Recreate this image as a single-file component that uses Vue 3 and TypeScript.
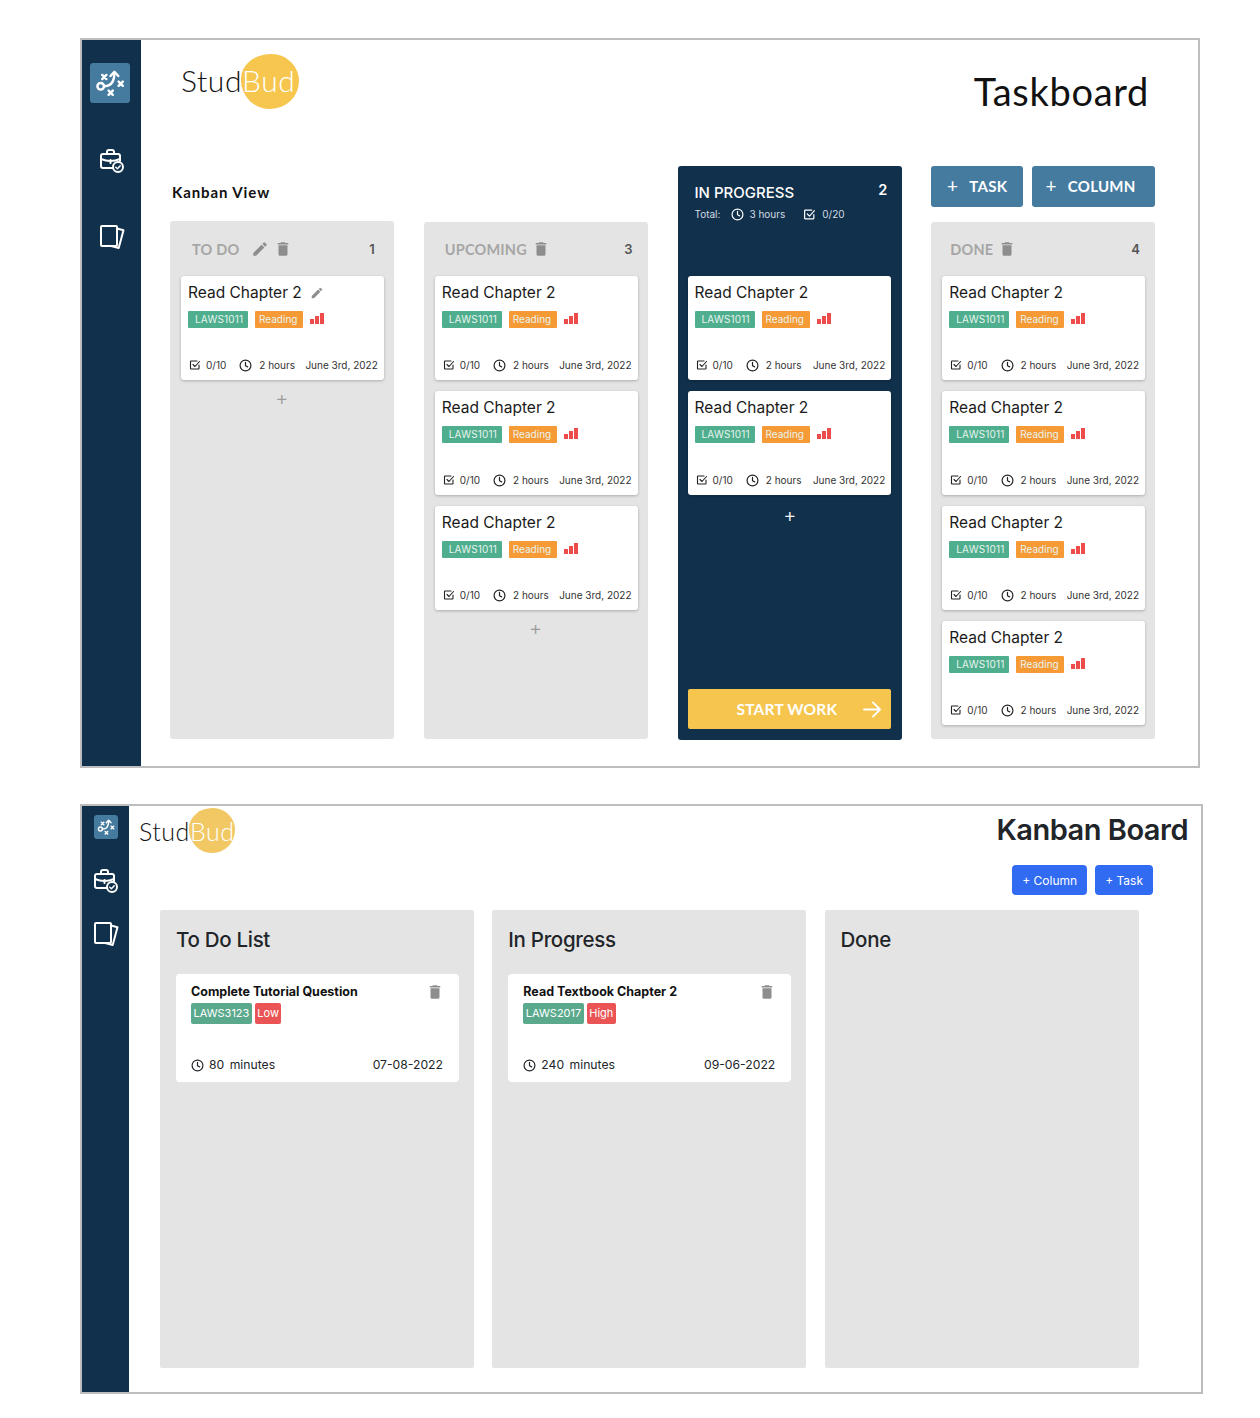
<script setup lang="ts">
interface Column {
  title: string;
  count: number;
  cards: number;
  editable?: boolean;
  add?: boolean;
  active?: boolean;
}

const columns: Column[] = [
  { title: "TO DO", count: 1, cards: 1, editable: true, add: true },
  { title: "UPCOMING", count: 3, cards: 3, add: true },
  { title: "IN PROGRESS", count: 2, cards: 2, add: true, active: true },
  { title: "DONE", count: 4, cards: 4 },
];

const boardColumns = [
  {
    title: "To Do List",
    card: { name: "Complete Tutorial Question", code: "LAWS3123", level: "Low", time: "80 minutes", due: "07-08-2022" },
  },
  {
    title: "In Progress",
    card: { name: "Read Textbook Chapter 2", code: "LAWS2017", level: "High", time: "240 minutes", due: "09-06-2022" },
  },
  { title: "Done", card: null },
];
</script>

<template>
  <svg class="defs" aria-hidden="true">
    <defs>
      <symbol id="i-strategy" viewBox="0 0 40 40">
        <g fill="none" stroke="currentColor" stroke-width="2.400" stroke-linecap="round" stroke-linejoin="round">
          <circle cx="10.700" cy="23.300" r="3.300" />
          <path d="M14 23.300c6.500 0 10.400-4.500 10.400-13.500" />
          <path d="M20.500 13l3.900-4.200 3.900 4.200" />
          <path d="M12.200 11.900l4.200 4.200M16.400 11.900l-4.200 4.200M28.600 18.600l4.200 4.200M32.800 18.600l-4.200 4.200M18.600 27.600l4.200 4.200M22.800 27.600l-4.200 4.200" />
        </g>
      </symbol>
      <symbol id="i-case" viewBox="0 0 26 26">
        <g fill="none" stroke="currentColor" stroke-width="2" stroke-linecap="round" stroke-linejoin="round">
          <path d="M14 20H4a2 2 0 0 1-2-2V8a2 2 0 0 1 2-2h15a2 2 0 0 1 2 2v5" />
          <path d="M8 6V4a2 2 0 0 1 2-2h3a2 2 0 0 1 2 2v2" />
          <path d="M2 11c6 2.600 13 2.600 19 0M11.500 12v3" />
          <circle cx="19" cy="19" r="5" />
          <path d="M16.800 19.200l1.600 1.500 2.800-3" stroke-width="1.500" />
        </g>
      </symbol>
      <symbol id="i-cards" viewBox="0 0 26 26">
        <g fill="none" stroke="currentColor" stroke-width="2" stroke-linejoin="round" stroke-linecap="round">
          <rect x="2" y="2" width="16" height="20" rx="1" />
          <path d="M18 4.500l6.500 1.800-4.800 17.700-7.500-2" />
        </g>
      </symbol>
      <symbol id="i-pencil" viewBox="0 0 24 24">
        <path fill="currentColor" d="M3 17.250V21h3.750L17.810 9.940l-3.750-3.750L3 17.250zM20.710 7.040a1 1 0 0 0 0-1.410l-2.340-2.340a1 1 0 0 0-1.410 0l-1.830 1.830 3.750 3.750 1.830-1.830z" />
      </symbol>
      <symbol id="i-trash" viewBox="0 0 24 24">
        <path fill="currentColor" d="M6 19c0 1.100.9 2 2 2h8c1.100 0 2-.9 2-2V7H6v12zM19 4h-3.500l-1-1h-5l-1 1H5v2h14V4z" />
      </symbol>
      <symbol id="i-check" viewBox="0 0 24 24">
        <g fill="none" stroke="currentColor" stroke-width="2.200" stroke-linecap="round" stroke-linejoin="round">
          <path d="M20 12v7a1 1 0 0 1-1 1H4a1 1 0 0 1-1-1V5a1 1 0 0 1 1-1h12" />
          <path d="M8 11l4 4 9-10" />
        </g>
      </symbol>
      <symbol id="i-clock" viewBox="0 0 24 24">
        <g fill="none" stroke="currentColor" stroke-width="2.200" stroke-linecap="round" stroke-linejoin="round">
          <circle cx="12" cy="12" r="10" />
          <path d="M12 6v6.500l4 2" />
        </g>
      </symbol>
      <symbol id="i-bars" viewBox="0 0 14 11">
        <path fill="currentColor" d="M0 6h4v5H0zM5 3h4v8H5zM10 0h4v11h-4z" />
      </symbol>
    </defs>
  </svg>

  <div class="page">
    <!-- design mockup -->
    <section class="frame frame-design">
      <nav class="side">
        <span class="side-tile"><svg><use href="#i-strategy" /></svg></span>
        <span class="side-icon case"><svg><use href="#i-case" /></svg></span>
        <span class="side-icon cards"><svg><use href="#i-cards" /></svg></span>
      </nav>
      <div class="main">
        <header class="top">
          <div class="logo"><span class="blob"></span><span>Stud</span><span class="bud">Bud</span></div>
          <h1>Taskboard</h1>
        </header>
        <div class="board">
          <div v-for="(col, i) in columns" :key="col.title" class="slot">
            <h2 v-if="i === 0" class="view-label">Kanban View</h2>
            <div v-if="i === 3" class="top-actions">
              <button type="button" class="task-btn"><span>+</span>TASK</button>
              <button type="button" class="col-btn"><span>+</span>COLUMN</button>
            </div>
            <div class="panel" :class="{ active: col.active, first: i === 0, last: i === 3 }">
              <div v-if="col.active" class="active-head">
                <div class="active-title"><span>{{ col.title }}</span><b>{{ col.count }}</b></div>
                <div class="totals">
                  <span>Total:</span>
                  <svg class="ic-total"><use href="#i-clock" /></svg>
                  <span>3 hours</span>
                  <svg class="ic-total second"><use href="#i-check" /></svg>
                  <span>0/20</span>
                </div>
              </div>
              <div v-else class="panel-head">
                <span class="panel-title">{{ col.title }}</span>
                <svg v-if="col.editable" class="ic-head"><use href="#i-pencil" /></svg>
                <svg class="ic-head"><use href="#i-trash" /></svg>
                <span class="panel-count">{{ col.count }}</span>
              </div>
              <div class="cards">
                <article v-for="n in col.cards" :key="n" class="card">
                  <div class="card-name">
                    Read Chapter 2
                    <svg v-if="col.editable" class="ic-edit"><use href="#i-pencil" /></svg>
                  </div>
                  <div class="tags">
                    <span class="tag green">LAWS1011</span>
                    <span class="tag orange">Reading</span>
                    <svg class="ic-bars"><use href="#i-bars" /></svg>
                  </div>
                  <div class="card-foot">
                    <svg class="ic-foot"><use href="#i-check" /></svg>
                    <span class="progress">0/10</span>
                    <svg class="ic-foot clock"><use href="#i-clock" /></svg>
                    <span>2 hours</span>
                    <span class="date">June 3rd, 2022</span>
                  </div>
                </article>
              </div>
              <div v-if="col.add" class="add">+</div>
              <button v-if="col.active" type="button" class="start">
                <span>START WORK</span>
                <svg viewBox="0 0 20 18" class="arrow">
                  <path d="M1 9h17M10.500 1.500 18 9l-7.500 7.500" fill="none" stroke="currentColor" stroke-width="2" stroke-linecap="round" stroke-linejoin="round" />
                </svg>
              </button>
            </div>
          </div>
        </div>
      </div>
    </section>

    <!-- built page -->
    <section class="frame frame-built">
      <nav class="side side-small">
        <span class="side-tile"><svg><use href="#i-strategy" /></svg></span>
        <span class="side-icon case"><svg><use href="#i-case" /></svg></span>
        <span class="side-icon cards"><svg><use href="#i-cards" /></svg></span>
      </nav>
      <div class="main-built">
        <header class="top-built">
          <div class="logo logo-small"><span class="blob"></span><span>Stud</span><span class="bud">Bud</span></div>
          <div class="top-right">
            <h1>Kanban Board</h1>
            <div class="blue-actions">
              <button type="button">+ Column</button>
              <button type="button">+ Task</button>
            </div>
          </div>
        </header>
        <div class="board-built">
          <div v-for="col in boardColumns" :key="col.title" class="lane">
            <h2>{{ col.title }}</h2>
            <article v-if="col.card" class="lane-card">
              <div class="lane-name">
                <span>{{ col.card.name }}</span>
                <svg><use href="#i-trash" /></svg>
              </div>
              <div class="lane-tags">
                <span class="lane-tag code">{{ col.card.code }}</span>
                <span class="lane-tag level">{{ col.card.level }}</span>
              </div>
              <div class="lane-foot">
                <svg><use href="#i-clock" /></svg>
                <span class="lane-time">{{ col.card.time }}</span>
                <span class="lane-due">{{ col.card.due }}</span>
              </div>
            </article>
          </div>
        </div>
      </div>
    </section>
  </div>
</template>

<style>
html,
body {
  background: #ffffff;
}
</style>

<style scoped>
.defs {
  position: absolute;
  width: 0;
  height: 0;
}

.page {
  display: flex;
  flex-direction: column;
  gap: 36px;
  box-sizing: border-box;
  width: 1260px;
  height: 1418px;
  padding: 38px 0 0 80px;
  font-family: Inter, "Liberation Sans", sans-serif;
  color: #111111;
}

.frame {
  display: flex;
  box-sizing: border-box;
  border: 2px solid #bdbdbd;
  background: #ffffff;
}

.frame-design {
  width: 1120px;
  height: 730px;
}

.frame-built {
  width: 1123px;
  height: 590px;
}

.side {
  display: flex;
  flex-direction: column;
  align-items: center;
  flex: none;
  width: 59px;
  padding-top: 23px;
  box-sizing: border-box;
  background: #11304b;
  color: #ffffff;
}

.side-tile {
  display: block;
  width: 40px;
  height: 40px;
  margin-left: -3px;
  background: #467ba0;
  border-radius: 3px;
}

.side-tile svg {
  display: block;
  width: 100%;
  height: 100%;
}

.side-icon svg {
  display: block;
  width: 26px;
  height: 26px;
}

.side-icon.case {
  margin-top: 45px;
}

.side-icon.cards {
  margin-top: 50px;
}

.side-small {
  width: 47px;
  padding-top: 9px;
}

.side-small .side-tile {
  width: 24px;
  height: 24px;
  margin-left: 0;
}

.side-small .side-icon.case {
  margin-top: 29px;
}

.side-small .side-icon.cards {
  margin-top: 27px;
}

.main {
  flex: 1;
  display: flex;
  flex-direction: column;
  padding: 0 43px 27px 29px;
  min-width: 0;
}

.top {
  position: relative;
  display: flex;
  justify-content: space-between;
  height: 126px;
  flex: none;
}

.logo {
  position: relative;
  align-self: flex-start;
  display: flex;
  margin: 21px 0 0 11px;
  font-family: Lato, "Liberation Sans", sans-serif;
  font-weight: 300;
  font-size: 30px;
  line-height: 38px;
  letter-spacing: 0.6px;
  color: #111111;
}

.logo span {
  position: relative;
}

.logo .blob {
  position: absolute;
  left: 60px;
  top: -7px;
  width: 58px;
  height: 55px;
  background: #f6c64f;
  border-radius: 52% 48% 50% 50% / 46% 50% 52% 54%;
}

.logo .bud {
  color: #ffffff;
}

.top h1 {
  margin: 28px 6px 0 0;
  font-family: Lato, "Liberation Sans", sans-serif;
  font-weight: 400;
  font-size: 38px;
  line-height: 46px;
  letter-spacing: 0.7px;
  color: #111111;
}

.board {
  flex: 1;
  display: grid;
  grid-template-columns: repeat(4, 1fr);
  column-gap: 30px;
  min-height: 0;
}

.slot {
  display: flex;
  flex-direction: column;
  justify-content: flex-end;
  min-width: 0;
}

.view-label {
  margin: 0 0 20px 2px;
  font-family: Lato, "Liberation Sans", sans-serif;
  font-weight: 700;
  font-size: 15px;
  line-height: 18px;
  letter-spacing: 0.9px;
  color: #111111;
}

.top-actions {
  display: flex;
  gap: 9px;
  margin-bottom: 15px;
}

.top-actions button {
  display: flex;
  align-items: center;
  justify-content: center;
  height: 41px;
  padding: 0 0 2px;
  border: 0;
  border-radius: 3px;
  background: #467ba0;
  color: #ffffff;
  font-family: Lato, "Liberation Sans", sans-serif;
  font-weight: 700;
  font-size: 15px;
  letter-spacing: 0.3px;
}

.top-actions button span {
  font-weight: 400;
  font-size: 19px;
  margin-right: 11px;
}

.task-btn {
  width: 92px;
}

.top-actions .col-btn {
  width: 123px;
  padding-right: 6px;
}

.panel {
  display: flex;
  flex-direction: column;
  height: 517px;
  box-sizing: border-box;
  background: #e4e4e4;
  border-radius: 3px;
}

.panel.first {
  height: 518px;
}

.panel.active {
  height: 574px;
  margin: 0 -1px -1px 0;
  background: #11304b;
  padding-bottom: 11px;
}

.panel-head {
  display: flex;
  align-items: center;
  gap: 1px;
  flex: none;
  height: 54px;
  box-sizing: border-box;
  padding: 0 15px 0 21px;
}

.panel.first .panel-head {
  height: 55px;
  padding: 1px 19px 0 22px;
  gap: 5px;
}

.panel.first .panel-title {
  margin-right: 7px;
}

.panel.last .panel-head {
  padding-left: 19px;
}

.panel-title {
  margin-right: 4px;
  font-family: Lato, "Liberation Sans", sans-serif;
  font-weight: 700;
  font-size: 14.500px;
  letter-spacing: 0.2px;
  color: #a6a6a6;
}

.ic-head {
  width: 18px;
  height: 18px;
  color: #8d8d8d;
}

.panel-count {
  margin-left: auto;
  font-weight: 600;
  font-size: 13px;
  color: #555555;
}

.active-head {
  flex: none;
  height: 110px;
  box-sizing: border-box;
  padding: 17px 15px 0 17px;
  color: #ffffff;
}

.active-title {
  display: flex;
  justify-content: space-between;
  align-items: flex-start;
  font-weight: 500;
  font-size: 15px;
  line-height: 20px;
}

.active-title b {
  font-weight: 600;
  font-size: 14.500px;
  margin-top: -3px;
}

.totals {
  display: flex;
  align-items: center;
  margin-top: 4px;
  font-size: 10px;
  line-height: 14px;
  color: #d3dbe2;
}

.ic-total {
  width: 13px;
  height: 13px;
  margin: 0 5px 0 11px;
  color: #ffffff;
}

.ic-total.second {
  margin-left: 18px;
  margin-right: 6px;
}

.cards {
  display: flex;
  flex-direction: column;
  gap: 11px;
  padding: 0 10px 0 11px;
}

.panel.active .cards {
  padding: 0 11px 0 10px;
}

.card {
  display: flex;
  flex-direction: column;
  box-sizing: border-box;
  height: 104px;
  padding: 7px 6px 8px 7px;
  background: #ffffff;
  border-radius: 3px;
  box-shadow: 0 1px 3px rgb(0 0 0 / 25%);
}

.card-name {
  display: flex;
  align-items: center;
  font-size: 15.500px;
  line-height: 20px;
  color: #1a1a1a;
}

.ic-edit {
  width: 14px;
  height: 14px;
  margin-left: 8px;
  color: #8d8d8d;
}

.tags {
  display: flex;
  align-items: center;
  gap: 7px;
  margin-top: 8px;
}

.tag {
  box-sizing: border-box;
  height: 17px;
  padding: 0 7px;
  border-radius: 1px;
  color: #e9f4ef;
  font-size: 10px;
  line-height: 17px;
}

.tag.green {
  background: #4fae8d;
  width: 60px;
  letter-spacing: 0.2px;
}

.tag.orange {
  background: #f59a35;
  width: 48px;
  padding: 0 4px;
}

.ic-bars {
  width: 14px;
  height: 11px;
  color: #ee4b4b;
  margin-top: -3px;
}

.card-foot {
  display: flex;
  align-items: center;
  margin-top: auto;
  font-size: 10px;
  line-height: 14px;
  color: #333333;
}

.ic-foot {
  width: 12px;
  height: 12px;
  margin-left: 1px;
  color: #222222;
}

.progress {
  margin-left: 5px;
}

.ic-foot.clock {
  width: 13px;
  height: 13px;
  margin: 0 7px 0 13px;
}

.date {
  margin-left: auto;
}

.add {
  margin-top: 7px;
  text-align: center;
  font-size: 20px;
  font-weight: 300;
  line-height: 22px;
  color: #9a9a9a;
}

.panel.active .add {
  margin-top: 9px;
  color: #ffffff;
}

.start {
  display: flex;
  align-items: center;
  justify-content: space-between;
  flex: none;
  box-sizing: border-box;
  height: 40px;
  margin: auto 11px 0 10px;
  padding: 0 9px 0 49px;
  border: 0;
  border-radius: 2px;
  background: #f5c54e;
  color: #ffffff;
  font-family: Lato, "Liberation Sans", sans-serif;
  font-weight: 700;
  font-size: 15.500px;
  letter-spacing: 0.2px;
}

.arrow {
  width: 19px;
  height: 17px;
}

.main-built {
  flex: 1;
  display: flex;
  flex-direction: column;
  min-width: 0;
}

.top-built {
  display: flex;
  justify-content: space-between;
  flex: none;
  height: 104px;
  padding: 0 13px 0 10px;
}

.logo-small {
  margin: 2px 0 0 0;
  font-size: 25px;
  line-height: 46px;
  letter-spacing: 0.5px;
}

.logo-small .blob {
  left: 50px;
  top: 0;
  width: 46px;
  height: 45px;
  background: #f2c864;
}

.top-right {
  display: flex;
  flex-direction: column;
  align-items: flex-end;
}

.top-right h1 {
  margin: 6px 0 0;
  font-weight: 600;
  font-size: 29px;
  line-height: 36px;
  letter-spacing: -0.5px;
  color: #212529;
}

.blue-actions {
  display: flex;
  gap: 8px;
  margin: 17px 35px 0 0;
}

.blue-actions button {
  height: 30px;
  padding: 0 10px;
  border: 0;
  border-radius: 4px;
  background: #316bf2;
  color: #ffffff;
  font-family: Inter, "Liberation Sans", sans-serif;
  font-size: 12px;
}

.board-built {
  display: grid;
  grid-template-columns: repeat(3, 314px);
  column-gap: 18.300px;
  padding-left: 31px;
}

.lane {
  height: 458px;
  box-sizing: border-box;
  padding: 0 15px 0 16px;
  background: #e4e4e4;
  border-radius: 2px;
}

.lane h2 {
  margin: 0;
  height: 64px;
  font-weight: 500;
  font-size: 20.500px;
  line-height: 60px;
  letter-spacing: -0.3px;
  color: #212529;
}

.lane-card {
  display: flex;
  flex-direction: column;
  box-sizing: border-box;
  height: 108px;
  padding: 10px 16px 9px 15px;
  background: #ffffff;
  border-radius: 4px;
}

.lane-name {
  display: flex;
  justify-content: space-between;
  align-items: center;
  font-weight: 700;
  font-size: 12.500px;
  line-height: 16px;
  color: #111111;
}

.lane-name svg {
  width: 18px;
  height: 18px;
  margin: -1px -1px -1px 0;
  color: #8d8d8d;
}

.lane-tags {
  display: flex;
  gap: 3px;
  margin-top: 3px;
}

.lane-tag {
  height: 21px;
  padding: 0 2.500px;
  border-radius: 2px;
  color: #ffffff;
  font-size: 11px;
  line-height: 21px;
}

.lane-tag.code {
  background: #5aa98d;
}

.lane-tag.level {
  background: #ea5455;
}

.lane-foot {
  display: flex;
  align-items: center;
  margin-top: auto;
  font-size: 12.200px;
  line-height: 16px;
  color: #212529;
}

.lane-foot svg {
  width: 13px;
  height: 13px;
  margin-right: 5px;
}

.lane-time {
  word-spacing: 2px;
}

.lane-due {
  margin-left: auto;
}
</style>
